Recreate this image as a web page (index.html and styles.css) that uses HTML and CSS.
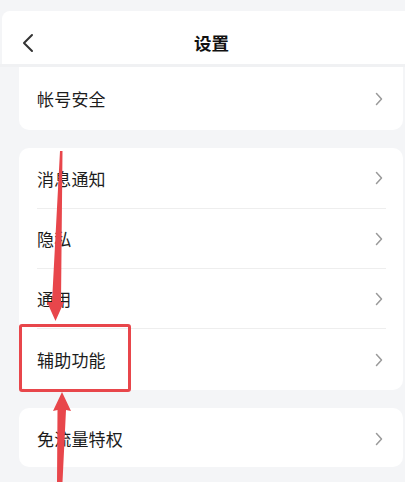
FILE: index.html
```html
<!DOCTYPE html>
<html lang="zh-CN">
<head>
<meta charset="utf-8">
<title>设置</title>
<link rel="stylesheet" href="styles.css">
</head>
<body>
<div class="page">
  <header class="topbar">
    <svg class="back" width="14" height="20" viewBox="0 0 14 20"><path d="M11 2 L3 10 L11 18" fill="none" stroke="#333" stroke-width="2" stroke-linecap="round" stroke-linejoin="round"/></svg>
    <h1 class="title">设置</h1>
  </header>
  <div class="divider-band"></div>
  <main class="list">
    <section class="card card-first">
      <div class="row"><span class="label">帐号安全</span><svg class="chev" width="8" height="14" viewBox="0 0 8 14"><path d="M1.5 1.5 L6.5 7 L1.5 12.5" fill="none" stroke="#9a9a9a" stroke-width="1.5" stroke-linecap="round" stroke-linejoin="round"/></svg></div>
    </section>
    <section class="card">
      <div class="row"><span class="label">消息通知</span><svg class="chev" width="8" height="14" viewBox="0 0 8 14"><path d="M1.5 1.5 L6.5 7 L1.5 12.5" fill="none" stroke="#9a9a9a" stroke-width="1.5" stroke-linecap="round" stroke-linejoin="round"/></svg></div>
      <div class="row"><span class="label">隐私</span><svg class="chev" width="8" height="14" viewBox="0 0 8 14"><path d="M1.5 1.5 L6.5 7 L1.5 12.5" fill="none" stroke="#9a9a9a" stroke-width="1.5" stroke-linecap="round" stroke-linejoin="round"/></svg></div>
      <div class="row"><span class="label">通用</span><svg class="chev" width="8" height="14" viewBox="0 0 8 14"><path d="M1.5 1.5 L6.5 7 L1.5 12.5" fill="none" stroke="#9a9a9a" stroke-width="1.5" stroke-linecap="round" stroke-linejoin="round"/></svg></div>
      <div class="row row-last"><span class="label">辅助功能</span><svg class="chev" width="8" height="14" viewBox="0 0 8 14"><path d="M1.5 1.5 L6.5 7 L1.5 12.5" fill="none" stroke="#9a9a9a" stroke-width="1.5" stroke-linecap="round" stroke-linejoin="round"/></svg></div>
    </section>
    <section class="card">
      <div class="row row-single"><span class="label">免流量特权</span><svg class="chev" width="8" height="14" viewBox="0 0 8 14"><path d="M1.5 1.5 L6.5 7 L1.5 12.5" fill="none" stroke="#9a9a9a" stroke-width="1.5" stroke-linecap="round" stroke-linejoin="round"/></svg></div>
    </section>
  </main>
  <div class="highlight"></div>
  <svg class="arrows" width="405" height="482" viewBox="0 0 405 482">
    <polygon points="60,151 62.5,151 61,302 64,302 55.5,321 47,302 52,302" fill="#e8464b"/>
    <polygon points="62,392 71,411 66,410 62.5,482 57,482 57.5,410 53,411" fill="#e8464b"/>
  </svg>
</div>
</body>
</html>
```
FILE: styles.css
```css
html, body {
  margin: 0;
  padding: 0;
}
body {
  background: #f4f5f7;
  font-family: "Noto Sans CJK SC", "Noto Sans", sans-serif;
  color: #1c1c1c;
}
.page {
  position: relative;
  width: 405px;
  height: 482px;
  overflow: hidden;
  padding-top: 11px;
  box-sizing: border-box;
}
.topbar {
  margin-left: 2px;
  height: 53px;
  padding-top: 11px;
  box-sizing: border-box;
  background: #ffffff;
  display: flex;
  align-items: center;
  border-radius: 8px 0 0 0;
}
.back {
  margin-left: 19px;
}
.title {
  margin: 0 0 0 159px;
  font-size: 17.5px;
  font-weight: 600;
  color: #111;
  line-height: 1;
}
.divider-band {
  height: 3px;
  background: #f0f1f3;
}
.list {
  display: flex;
  flex-direction: column;
  gap: 18px;
  padding-left: 19px;
  padding-right: 2px;
}
.card {
  background: #ffffff;
  border-radius: 10px;
  overflow: hidden;
}
.card-first {
  border-radius: 0 0 10px 10px;
}
.row {
  height: 60px;
  display: flex;
  align-items: center;
  justify-content: space-between;
  padding: 0 20px 0 18px;
  margin: 0;
  position: relative;
  box-sizing: border-box;
}
.card-first .row {
  height: 63px;
  padding-bottom: 0;
}
.card .row + .row {
  border-top: 1px solid #eeeeee;
  margin-left: 18px;
  padding-left: 0;
  margin-right: 17px;
  padding-right: 3px;
}
.row-last {
  height: 62px !important;
}
.row-single {
  height: 59px;
  padding-top: 2px;
}
.label {
  font-size: 17px;
  letter-spacing: 0.2px;
  line-height: 1;
}
.chev {
  display: block;
}
.highlight {
  position: absolute;
  left: 19px;
  top: 324px;
  width: 112px;
  height: 68px;
  box-sizing: border-box;
  border: 3px solid #e8464b;
  border-radius: 3px;
}
.arrows {
  position: absolute;
  left: 0;
  top: 0;
}
```
